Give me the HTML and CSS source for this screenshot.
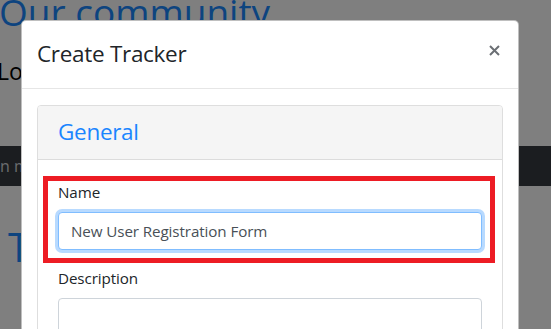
FILE: index.html
```html
<!DOCTYPE html>
<html lang="en">
<head>
<meta charset="utf-8">
<title>Create Tracker</title>
<link rel="stylesheet" href="styles.css">
</head>
<body>
<div class="page">
  <h1 class="hero-title">Our community</h1>
  <p class="hero-lead">Log in to your account</p>
  <nav class="navbar"><span class="nav-text">in more ways than one</span></nav>
  <h2 class="section-title">Trackers</h2>
</div>
<div class="backdrop"></div>
<div class="modal">
  <div class="modal-header">
    <h5 class="modal-title">Create Tracker</h5>
    <button class="close" type="button" aria-label="Close">
      <svg width="11" height="11" viewBox="0 0 11 11"><path d="M1 1L10 10M10 1L1 10" stroke="#6b6f74" stroke-width="2" fill="none"/></svg>
    </button>
  </div>
  <div class="modal-body">
    <div class="card">
      <div class="card-header"><h4 class="card-title">General</h4></div>
      <div class="card-body">
        <div class="form-group">
          <label class="form-label">Name</label>
          <div class="form-control focused">New User Registration Form</div>
        </div>
        <div class="form-group">
          <label class="form-label">Description</label>
          <div class="form-control textarea"></div>
        </div>
      </div>
    </div>
  </div>
</div>
<div class="annotation"></div>
</body>
</html>
```
FILE: styles.css
```css
* { box-sizing: border-box; }
html, body { margin: 0; padding: 0; }
body {
  width: 551px;
  height: 329px;
  overflow: hidden;
  background: #fff;
  font-family: "Open Sans", "Noto Sans", sans-serif;
  color: #212529;
  position: relative;
}
.page { padding: 0; }
.hero-title {
  margin: -10px 0 0 -1px;
  font-size: 37px;
  font-weight: 400;
  line-height: 44px;
  color: #1a88ff;
  white-space: nowrap;
}
.hero-lead {
  margin: 22px 0 0 -3px;
  font-size: 23px;
  line-height: 30px;
  color: #000;
  white-space: nowrap;
}
.navbar {
  margin-top: 60px;
  height: 40px;
  background: #363b41;
  display: flex;
  align-items: center;
  white-space: nowrap;
}
.nav-text { margin-left: -4px; color: #d4d8dc; font-size: 16px; }
.section-title {
  margin: 37px 0 0 8px;
  font-size: 40px;
  font-weight: 400;
  line-height: 48px;
  color: #1a88ff;
}
.backdrop {
  position: absolute;
  inset: 0;
  background: rgba(0, 0, 0, 0.5);
}
.modal {
  position: absolute;
  left: 21px;
  top: 20px;
  width: 498px;
  background: #fff;
  border: 1px solid rgba(0, 0, 0, 0.25);
  border-radius: 5px;
}
.modal-header {
  display: flex;
  align-items: flex-start;
  padding: 15px 15px 16px 15px;
  border-bottom: 1px solid #e6e6e6;
}
.modal-title {
  margin: 0;
  font-size: 22.5px;
  letter-spacing: -0.3px;
  font-weight: 400;
  line-height: 36px;
  color: #212529;
}
.close {
  margin: 9px 3px 0 auto;
  padding: 0;
  border: 0;
  background: transparent;
  width: 11px;
  height: 11px;
  display: flex;
}
.modal-body { padding: 16px 15px 15px 15px; }
.card {
  border: 1px solid #dedede;
  border-radius: 4px;
  background: #fff;
}
.card-header {
  padding: 12px 20px;
  background: #f5f5f5;
  border-bottom: 1px solid #dcdcdc;
  border-radius: 3px 3px 0 0;
}
.card-title {
  margin: 0;
  font-size: 22.5px;
  letter-spacing: -0.3px;
  font-weight: 400;
  line-height: 28.8px;
  color: #1a85ff;
}
.card-body { padding: 20px; }
.form-group { margin-bottom: 16px; }
.form-label {
  display: block;
  margin-bottom: 8px;
  font-size: 15.2px;
  letter-spacing: -0.1px;
  line-height: 24px;
  color: #212529;
}
.form-control {
  height: 38px;
  padding: 6px 12px;
  font-size: 15.2px;
  letter-spacing: -0.1px;
  line-height: 24px;
  color: #495057;
  background: #fff;
  border: 1px solid #ced4da;
  border-radius: 4px;
  white-space: nowrap;
}
.form-control.focused {
  border-color: #80bdff;
  box-shadow: 0 0 0 3px rgba(0, 123, 255, 0.28);
}
.form-control.textarea { height: 80px; }
.annotation {
  position: absolute;
  left: 43px;
  top: 176px;
  width: 452px;
  height: 87px;
  border: 5px solid #ed1c24;
}
```
